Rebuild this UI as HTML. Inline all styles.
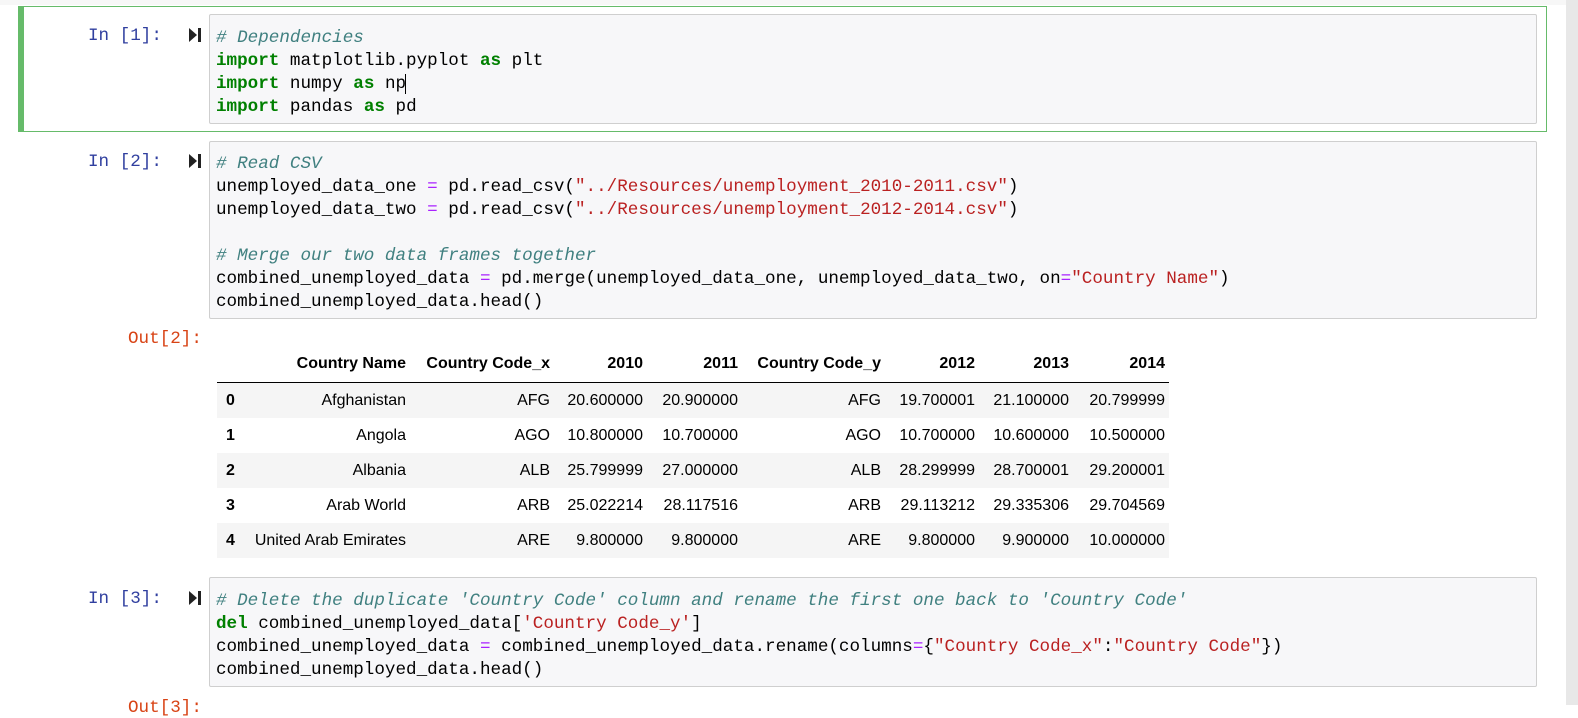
<!DOCTYPE html>
<html><head><meta charset="utf-8"><style>
body{margin:0;width:1578px;height:705px;overflow:hidden;background:#fff;position:relative;font-family:"Liberation Sans",Arial,sans-serif}
.abs{position:absolute}
.inp{position:absolute;left:209px;width:1328px;background:#f7f7f9;border:1px solid #cfcfcf;border-radius:2px;box-sizing:border-box}
pre{margin:0;position:absolute;left:6px;font-family:"Liberation Mono","DejaVu Sans Mono",monospace;font-size:17.6px;line-height:23px;color:#000}
.p{font-family:"Liberation Mono",monospace;font-size:17.6px;color:#303F9F;position:absolute;left:88px}
.o{color:#D84315;left:128px}
.k{color:#008000;font-weight:bold}.c{color:#408080;font-style:italic}.s{color:#BA2121}.op{color:#AA22FF}
.run{position:absolute;left:188px;width:14px;height:16px}
table{position:absolute;left:217px;top:345px;border-collapse:collapse;font-size:16px;color:#000;table-layout:fixed;width:952px}
td,th{text-align:right;padding:0 4px 0 4px;height:35px;white-space:nowrap;overflow:visible}
th{font-weight:bold}
thead th{border-bottom:1.5px solid #000;height:37px}
tbody th{text-align:left;padding-left:9px}
tbody tr:nth-child(odd){background:#f5f5f5}
</style></head><body>
<div class="abs" style="left:1566px;top:0;width:12px;height:705px;background:#e8e8e8"></div>
<div class="abs" style="left:0;top:0;width:1566px;height:5px;background:#f7f7f7"></div>
<div class="abs" style="left:18px;top:6px;width:1529px;height:126px;border:1px solid #66bb6a;box-sizing:border-box;border-left:6px solid #66bb6a"></div>

<div class="p" style="top:26px">In [1]:</div>
<svg class="run" style="top:27px" viewBox="0 0 14 16"><path d="M1 1L9 8L1 15Z" fill="#222"/><rect x="10" y="1" width="3" height="14" fill="#222"/></svg>
<div class="inp" style="top:14px;height:110px"><pre style="top:12px"><span class="c"># Dependencies</span>
<span class="k">import</span> matplotlib.pyplot <span class="k">as</span> plt
<span class="k">import</span> numpy <span class="k">as</span> np<span style="border-left:1px solid #000;margin-left:-1px"></span>
<span class="k">import</span> pandas <span class="k">as</span> pd</pre></div>

<div class="p" style="top:152px">In [2]:</div>
<svg class="run" style="top:153px" viewBox="0 0 14 16"><path d="M1 1L9 8L1 15Z" fill="#222"/><rect x="10" y="1" width="3" height="14" fill="#222"/></svg>
<div class="inp" style="top:141px;height:178px"><pre style="top:11px"><span class="c"># Read CSV</span>
unemployed_data_one <span class="op">=</span> pd.read_csv(<span class="s">"../Resources/unemployment_2010-2011.csv"</span>)
unemployed_data_two <span class="op">=</span> pd.read_csv(<span class="s">"../Resources/unemployment_2012-2014.csv"</span>)

<span class="c"># Merge our two data frames together</span>
combined_unemployed_data <span class="op">=</span> pd.merge(unemployed_data_one, unemployed_data_two, on<span class="op">=</span><span class="s">"Country Name"</span>)
combined_unemployed_data.head()</pre></div>

<div class="p o" style="top:329px">Out[2]:</div>
<table>
<colgroup><col style="width:30px"><col style="width:163px"><col style="width:144px"><col style="width:93px"><col style="width:95px"><col style="width:143px"><col style="width:94px"><col style="width:94px"><col style="width:96px"></colgroup>
<thead><tr><th></th><th>Country Name</th><th>Country Code_x</th><th>2010</th><th>2011</th><th>Country Code_y</th><th>2012</th><th>2013</th><th>2014</th></tr></thead>
<tbody>
<tr><th>0</th><td>Afghanistan</td><td>AFG</td><td>20.600000</td><td>20.900000</td><td>AFG</td><td>19.700001</td><td>21.100000</td><td>20.799999</td></tr>
<tr><th>1</th><td>Angola</td><td>AGO</td><td>10.800000</td><td>10.700000</td><td>AGO</td><td>10.700000</td><td>10.600000</td><td>10.500000</td></tr>
<tr><th>2</th><td>Albania</td><td>ALB</td><td>25.799999</td><td>27.000000</td><td>ALB</td><td>28.299999</td><td>28.700001</td><td>29.200001</td></tr>
<tr><th>3</th><td>Arab World</td><td>ARB</td><td>25.022214</td><td>28.117516</td><td>ARB</td><td>29.113212</td><td>29.335306</td><td>29.704569</td></tr>
<tr><th>4</th><td>United Arab Emirates</td><td>ARE</td><td>9.800000</td><td>9.800000</td><td>ARE</td><td>9.800000</td><td>9.900000</td><td>10.000000</td></tr>
</tbody></table>

<div class="p" style="top:589px">In [3]:</div>
<svg class="run" style="top:590px" viewBox="0 0 14 16"><path d="M1 1L9 8L1 15Z" fill="#222"/><rect x="10" y="1" width="3" height="14" fill="#222"/></svg>
<div class="inp" style="top:577px;height:110px"><pre style="top:12px"><span class="c"># Delete the duplicate 'Country Code' column and rename the first one back to 'Country Code'</span>
<span class="k">del</span> combined_unemployed_data[<span class="s">'Country Code_y'</span>]
combined_unemployed_data <span class="op">=</span> combined_unemployed_data.rename(columns<span class="op">=</span>{<span class="s">"Country Code_x"</span>:<span class="s">"Country Code"</span>})
combined_unemployed_data.head()</pre></div>
<div class="p o" style="top:698px">Out[3]:</div>
</body></html>
